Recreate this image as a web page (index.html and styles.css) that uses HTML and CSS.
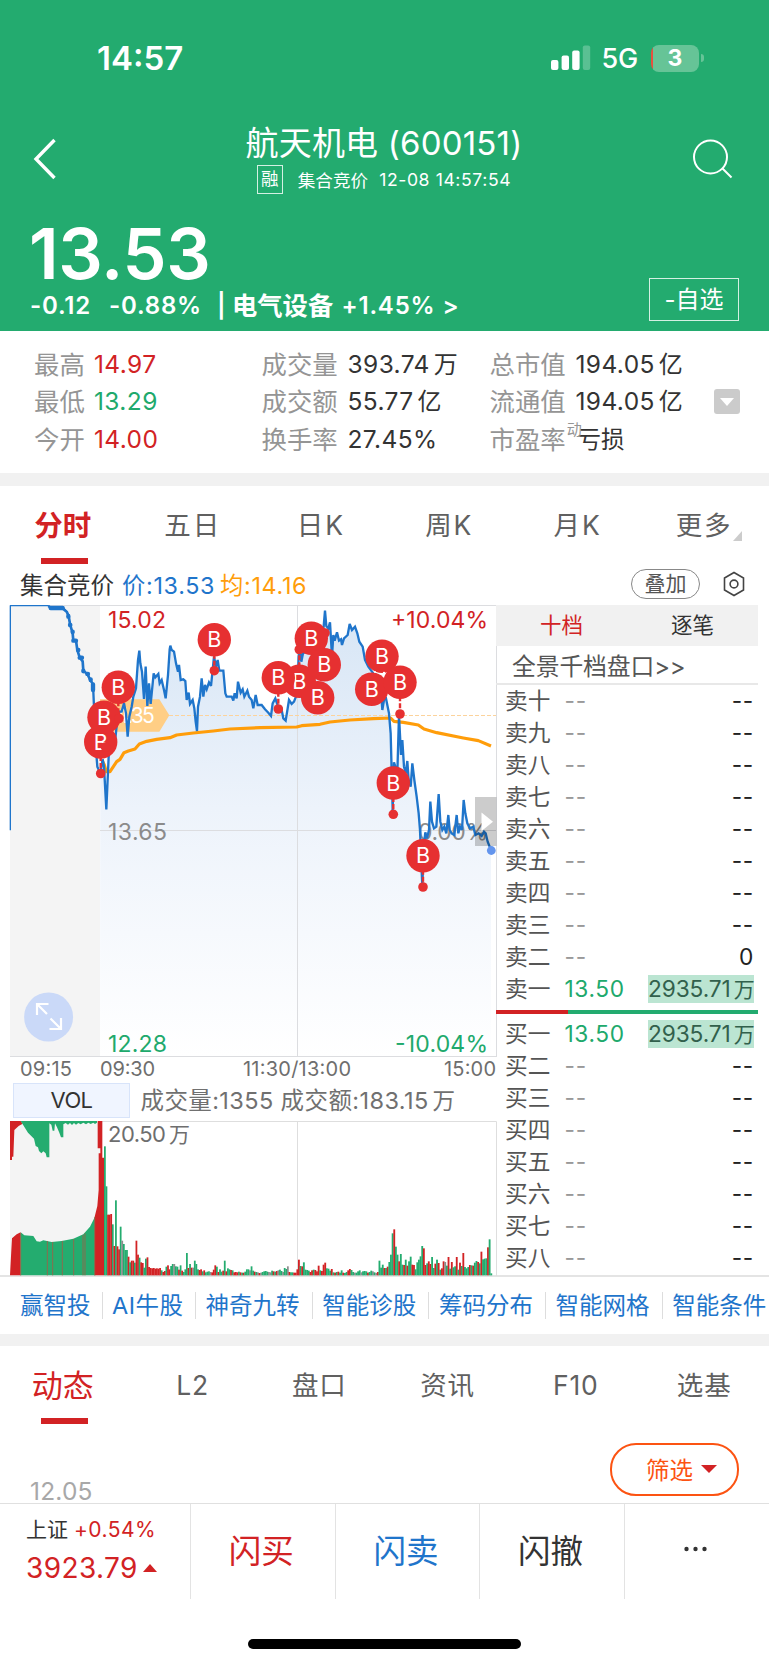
FILE: index.html
```html
<!DOCTYPE html>
<html lang="zh-CN">
<head>
<meta charset="utf-8">
<title>航天机电 (600151)</title>
<link rel="stylesheet" href="styles.css">
</head>
<body>
<header class="head">
  <div class="status">
    <span class="clock">14:57</span>
    <svg class="signal" width="40" height="26" viewBox="0 0 40 26"><g fill="#fff"><rect x="0" y="15" width="7.4" height="10" rx="2"/><rect x="10.6" y="10.500" width="7.400" height="14.500" rx="2"/><rect x="21.200" y="5.500" width="7.400" height="19.500" rx="2"/><rect x="31.800" y="0.500" width="7.400" height="24.500" rx="2" opacity=".25"/></g></svg>
    <span class="net">5G</span>
    <span class="battery">3</span><i class="tip"></i>
  </div>
  <div class="nav">
    <svg class="back" width="24" height="42" viewBox="0 0 24 42"><path d="M21.500 2 3 21l18.500 19" fill="none" stroke="#fff" stroke-width="3.400"/></svg>
    <div class="names">
      <h1>航天机电 (600151)</h1>
      <div class="sub"><span class="rong">融</span><span class="phase">集合竞价</span><span class="stamp">12-08 14:57:54</span></div>
    </div>
    <svg class="search" width="42" height="42" viewBox="0 0 42 42"><g fill="none" stroke="#fff" stroke-width="2"><circle cx="18.500" cy="18" r="16.500"/><path d="m30.500 29.500 9 9"/></g></svg>
  </div>
  <div class="price">13.53</div>
  <div class="change"><span class="c1">-0.12</span><span class="c2">-0.88%</span><span class="c3">|</span><span class="c4">电气设备</span><span class="c5">+1.45%</span><span>&gt;</span></div>
  <button class="fav">-自选</button>
</header>

<section class="stats">
  <dl class="s1"><dt>最高</dt><dd class="red">14.97</dd><dt>最低</dt><dd class="green">13.29</dd><dt>今开</dt><dd class="red">14.00</dd></dl>
  <dl class="s2"><dt>成交量</dt><dd>393.74<b>万</b></dd><dt>成交额</dt><dd>55.77<b>亿</b></dd><dt>换手率</dt><dd>27.45%</dd></dl>
  <dl class="s2"><dt>总市值</dt><dd>194.05<b>亿</b></dd><dt>流通值</dt><dd>194.05<b>亿</b></dd><dt>市盈率<sup>动</sup></dt><dd class="loss">亏损</dd></dl>
  <span class="more"></span>
</section>
<div class="band"></div>

<nav class="tabs">
  <span class="on">分时</span><span class="mid">五日</span><span class="mid">日K</span><span class="mid">周K</span><span class="mid">月K</span><span class="corner">更多</span>
</nav>
<div class="info">
  <span class="i1">集合竞价</span><span class="blue">价:13.53</span><span class="orange">均:14.16</span>
  <span class="pill">叠加</span>
  <svg width="22" height="26" viewBox="0 0 22 26"><g fill="none" stroke="#444" stroke-width="1.600"><path d="M11 1.500 20.500 7v12L11 24.500 1.500 19V7z"/><circle cx="11" cy="13" r="3.900"/></g></svg>
</div>

<main class="market">
  <div class="charts">
    <svg class="trend" width="497" height="476" viewBox="0 605 497 476">
      <defs><linearGradient id="area" gradientUnits="userSpaceOnUse" x1="0" y1="605" x2="0" y2="1057"><stop offset="0" stop-color="#d6e5f5"/><stop offset=".45" stop-color="#edf3fb"/><stop offset="1" stop-color="#fff"/></linearGradient></defs>
      <rect x="10" y="605" width="90" height="452" fill="#f4f4f4"/>
      <path id="fill" fill="url(#area)"/>
      <path d="M10 605.500H496.500V1057M100 830.500H496M10 1056.500H496M297.500 605V1057" fill="none" stroke="#dcdde0"/>
      <path d="M169 715.500H496" stroke="#fcd39c" stroke-dasharray="4 2"/>
      <g font-size="23">
        <text x="108" y="628" textLength="58" fill="#d22224">15.02</text>
        <text x="391" y="628" textLength="97" fill="#d22224">+10.04%</text>
        <text x="108" y="840" textLength="59" fill="#8b8b8b">13.65</text>
        <text x="418" y="840" textLength="70" fill="#8b8b8b">0.00%</text>
        <text x="108" y="1051.500" textLength="59" fill="#20a96c">12.28</text>
        <text x="395" y="1051.500" textLength="93" fill="#20a96c">-10.04%</text>
      </g>
      <g transform="translate(0 600) scale(.33333)" fill="none" stroke-linejoin="round">
        <path d="M300 298H478L508 346 478 395H300z" fill="#ffce85"/>
        <text x="328" y="369" font-size="63" textLength="136" fill="#fff">14.35</text>
        <path id="avg" stroke="#ff9d0a" stroke-width="9.500"/>
        <path d="M31 691V17H145L150 22H190L203 38" stroke="#1f75cb" stroke-width="4"/>
        <path d="M145 18 152 23H185L200 35 206 48 210 72 218 100 220 122H228L232 150 239 172 248 184 250 212 262 222 270 238 279 253 280 275" stroke="#1f75cb" stroke-width="8"/>
        <path d="M152 24H188M205 48V50M210 75H211M218 95V97M220 122H228M234 150H235M239 173H246M250 212V214M262 222H264M272 238V240M279 253V270" stroke="#1f75cb" stroke-width="13" stroke-linecap="round"/>
        <path d="M280 275 282 320 290 475 292 500 301 520" stroke="#1f75cb" stroke-width="7"/>
        <path id="line" stroke="#1f75cb" stroke-width="7" stroke-linejoin="miter" stroke-miterlimit="3"/>
      </g>
      <circle cx="491.300" cy="850.500" r="4.400" fill="#6495ed"/>
      <g id="marks"></g>
      <rect x="475" y="797" width="21.500" height="49" fill="#000" opacity=".2"/>
      <path d="M481.500 812.500 493 821.700 481.500 831z" fill="#fff"/>
      <circle cx="48.600" cy="1017" r="24.500" fill="#cad9f8"/>
      <path d="M48.500 1004H37v11M37 1004l10 10M49.500 1029H61v-11M61 1029l-10.500-10.500" fill="none" stroke="#fff" stroke-width="2.200"/>
      <g font-size="20" fill="#6e6e6e">
        <text x="20" y="1076" textLength="52">09:15</text>
        <text x="100" y="1076" textLength="55">09:30</text>
        <text x="243" y="1076" textLength="108">11:30/13:00</text>
        <text x="444" y="1076" textLength="52">15:00</text>
      </g>
    </svg>
    <div class="volhead"><span class="vol">VOL</span><span class="voltext">成交量:1355 成交额:183.15<b>万</b></span></div>
    <svg class="volume" width="497" height="156" viewBox="0 1120 497 156">
      <path d="M10 1121.500H496.500V1276M297.500 1121V1276" fill="none" stroke="#dedede"/>
      <g transform="translate(0 1110) scale(.33333)">
        <path d="M30 33H300V496H30z" fill="#f4f4f4"/>
        <path d="M62 496V367L73 376 100 378 110 394 120 395 130 391 155 396 185 393 220 386 250 373 270 350 286 318V496z" fill="#24ac6f"/>
        <path d="M30 496 34 420 36 385 50 373 62 367V496zM284 496V320L292 288 296 240V130H301V115H293V33H307V143H312V496zM30 33H62L68 41 56 48 43 60 40 140H36V150H30z" fill="#d22224"/>
        <path d="M62 33H291V38L285 42 280 38 272 42 265 38 258 43 250 38 242 43 235 39 228 44 222 39 216 45 210 39 204 44 197 39 190 43V82H183L178 68 171 52 165 40 163 62H158L154 44 148 40V142H140L137 130 130 124 124 130 117 123 114 112 107 108 102 86 84 68z" fill="#24ac6f"/>
        <path d="M62 370V496M142 393V496M158 396V496M187 393V496M221 387V496M249 375V496M255 370V496M284 322V496" stroke="#8b6b4d" stroke-width="3"/>
        <g id="bars"></g>
      </g>
      <text x="108" y="1142" font-size="22" fill="#6e6e6e"><tspan textLength="58">20.50</tspan><tspan x="169" font-size="21">万</tspan></text>
    </svg>
  </div>
  <aside class="book">
    <div class="bookhead"><span class="red">十档</span><span>逐笔</span></div>
    <div class="full">全景千档盘口&gt;&gt;</div>
    <ul>
      <li><b>卖十</b><i>--</i><em>--</em></li><li><b>卖九</b><i>--</i><em>--</em></li><li><b>卖八</b><i>--</i><em>--</em></li><li><b>卖七</b><i>--</i><em>--</em></li><li><b>卖六</b><i>--</i><em>--</em></li><li><b>卖五</b><i>--</i><em>--</em></li><li><b>卖四</b><i>--</i><em>--</em></li><li><b>卖三</b><i>--</i><em>--</em></li><li><b>卖二</b><i>--</i><em class="zero">0</em></li><li><b>卖一</b><i class="px">13.50</i><em class="qty">2935.71<b>万</b></em></li>
    </ul>
    <div class="ratio"></div>
    <ul>
      <li><b>买一</b><i class="px">13.50</i><em class="qty">2935.71<b>万</b></em></li><li><b>买二</b><i>--</i><em>--</em></li><li><b>买三</b><i>--</i><em>--</em></li><li><b>买四</b><i>--</i><em>--</em></li><li><b>买五</b><i>--</i><em>--</em></li><li><b>买六</b><i>--</i><em>--</em></li><li><b>买七</b><i>--</i><em>--</em></li><li><b>买八</b><i>--</i><em>--</em></li>
    </ul>
  </aside>
</main>

<div class="links"><span>赢智投</span><span class="ai">AI牛股</span><span>神奇九转</span><span>智能诊股</span><span>筹码分布</span><span>智能网格</span><span>智能条件</span></div>
<div class="band low"></div>
<nav class="tabs second">
  <span class="on">动态</span><span class="mid">L2</span><span>盘口</span><span>资讯</span><span>F10</span><span>选基</span>
</nav>
<section class="feed"><span class="date">12.05</span><span class="filter">筛选<i></i></span></section>
<footer class="dock">
  <div class="index"><p><span>上证</span> <span class="red pct">+0.54%</span></p><p class="idx">3923.79<i></i></p></div>
  <div class="act red">闪买</div><div class="act blue">闪卖</div><div class="act">闪撤</div>
  <div class="act dots"><svg width="26" height="6" viewBox="0 0 26 6"><g fill="#333"><circle cx="3.500" cy="3" r="2.200"/><circle cx="12.500" cy="3" r="2.200"/><circle cx="21.500" cy="3" r="2.200"/></g></svg></div>
</footer>
<div class="home"></div>
<script src="chart.js"></script>
</body>
</html>
```

FILE: styles.css
```css
* { box-sizing: border-box; margin: 0; padding: 0; }
body { width: 769px; height: 1665px; overflow: hidden; background: #fff; color: #333; font-family: Inter, "Noto Sans CJK SC", sans-serif; display: flex; flex-direction: column; }
body > * { flex: none; }
b, i, em { font-weight: inherit; font-style: normal; }
.red { color: #d22224; }
.green { color: #20a96c; }
.blue { color: #1f75cb; }
.orange { color: #ff9d0a; }

.head { height: 331px; background: #23ab6f; color: #fff; position: relative; }
.status { height: 116px; padding: 0 65px 0 97px; display: flex; align-items: center; }
.clock { font-size: 33px; font-weight: 600; letter-spacing: 0; width: 454px; }
.net { font-size: 27px; font-weight: 500; margin-left: 10.5px; width: 49.5px; letter-spacing: -.3px; }
.battery { width: 48px; height: 27px; border-radius: 8px; background: linear-gradient(90deg, #e8503f 0 2px, #66c497 2px); font-size: 23px; line-height: 27px; font-weight: 700; text-align: center; }
.tip { width: 3px; height: 8px; margin-left: 1.5px; background: #66c497; border-radius: 0 3px 3px 0; }
.nav { height: 99px; padding: 6px 35px 0 33px; display: flex; justify-content: space-between; }
.back { margin-top: 16px; }
.search { margin-top: 17px; }
.names { width: 300px; margin-left: 19px; display: flex; flex-direction: column; align-items: center; }
h1 { font-size: 33px; font-weight: 400; line-height: 42px; letter-spacing: .2px; white-space: nowrap; }
.sub { display: flex; align-items: center; height: 32px; font-size: 17.600px; white-space: nowrap; margin-left: 0; margin-top: -1px; }
.rong { width: 26px; height: 29px; border: 1.500px solid #d5f0e3; line-height: 26px; font-size: 17.500px; text-align: center; }
.phase { margin-left: 15px; }
.stamp { margin-left: 11px; letter-spacing: .6px; }
.price { height: 79px; padding-left: 29px; font-size: 70px; line-height: 77px; font-weight: 600; letter-spacing: -.3px; }
.change { display: flex; height: 32px; padding-left: 30px; line-height: 24px; font-size: 24px; font-weight: 600; white-space: nowrap; letter-spacing: .8px; }
.c1 { width: 79px; } .c2 { width: 108px; } .c3 { width: 15px; } .c4 { width: 109.500px; font-size: 25.300px; letter-spacing: 0; } .c5 { width: 101px; }
.fav { position: absolute; left: 649px; top: 278px; width: 90px; height: 43px; border: 1.500px solid #d5f0e3; background: none; color: #fff; font: 24px/39px Inter, "Noto Sans CJK SC", sans-serif; }

.stats { height: 142px; padding: 15px 29px 0 34px; display: flex; }
.stats dl { display: grid; grid-template-columns: 60px 1fr; grid-auto-rows: 37.300px; line-height: 37px; font-size: 24.500px; letter-spacing: .4px; white-space: nowrap; }
.s1 { width: 227.500px; }
.stats .s2 { width: 228px; grid-template-columns: 86px 1fr; }
dt { color: #959595; font-size: 25.400px; letter-spacing: 0; }
dt sup { position: absolute; font-size: 15px; line-height: 16px; margin: 1px 0 0 1px; }
dd b { margin-left: 4px; font-size: 24px; }
.loss { padding-left: 2px; font-size: 23.500px; letter-spacing: 0; }
.more { width: 26px; height: 25px; margin: 43px 0 0 -4px; border-radius: 3px; background: #cbcbcb; display: flex; align-items: center; justify-content: center; }
.more::after { content: ""; border: 7px solid transparent; border-top: 8px solid #fff; border-bottom: 0; }
.band { height: 13px; background: #f1f1f1; }

.tabs { height: 79px; margin-left: -1.500px; display: grid; grid-template-columns: repeat(6, 128.300px); line-height: 79px; font-size: 26.500px; letter-spacing: 2px; text-align: center; color: #606060; white-space: nowrap; }
.tabs .on { color: #d22224; font-weight: 700; font-size: 28.500px; letter-spacing: 0; position: relative; }
.tabs .on::after { content: ""; position: absolute; left: 42.500px; top: 72px; width: 47px; height: 6px; background: #d22224; }
.mid { padding-left: 3.500px; }
.corner { position: relative; }
.corner::after { content: ""; position: absolute; left: 93px; top: 45px; border-left: 9px solid transparent; border-bottom: 10px solid #ccc; }
.info { height: 40px; padding: 0 24px 2px 20px; display: flex; align-items: center; font-size: 23.300px; letter-spacing: .7px; white-space: nowrap; }
.info .i1 { width: 102px; font-size: 23.500px; letter-spacing: 0; margin-top: -1px; }
.info .blue { width: 98px; margin-top: -1px; }
.info .orange { margin-top: -1px; }
.pill { margin: 0 23px 0 auto; width: 69px; height: 30px; border: 1.500px solid #888; border-radius: 15px; text-align: center; line-height: 27px; font-size: 21px; letter-spacing: 0; color: #555; }

.market { height: 672px; display: flex; border-bottom: 2px solid #e4e4e4; }
.charts { width: 496px; display: flex; flex-direction: column; }
.charts svg { display: block; overflow: visible; flex: none; }
.volhead { height: 39px; padding: 2px 0 3px 13px; display: flex; }
.vol { width: 117px; height: 35px; border: 1.500px solid #d8e4fa; background: #f0f5ff; text-align: center; line-height: 32px; font-size: 22px; letter-spacing: -.6px; }
.voltext { margin-left: 10.500px; line-height: 35px; font-size: 23.500px; letter-spacing: .4px; color: #707070; white-space: nowrap; }
.voltext b { margin-left: 4px; font-size: 22.500px; }
.book { width: 262px; }
.bookhead { height: 41px; background: #f1f1f1; display: grid; grid-template-columns: 131px 131px; text-align: center; line-height: 40px; font-size: 21.500px; }
.full { height: 39px; border-bottom: 2px solid #e8e8e8; padding-left: 16px; line-height: 41px; font-size: 23.800px; color: #555; white-space: nowrap; letter-spacing: -.1px; }
.book ul { list-style: none; }
.book li { height: 32px; display: flex; align-items: center; padding: 0 4px 0 9px; font-size: 22.700px; line-height: 32px; color: #555; white-space: nowrap; }
.book li > b { width: 59.500px; }
.book li > i { color: #999; letter-spacing: .7px; }
.book li > em { margin-left: auto; color: #222; letter-spacing: .7px; }
.book li > .px { color: #20a96c; letter-spacing: .6px; }
.book li > .qty { background: #bbe5d2; color: #32604c; height: 28px; line-height: 28px; width: 106px; letter-spacing: -.1px; }
.qty b { font-size: 21px; margin-left: 3px; }
.ratio { height: 4px; margin: 5px 0 4px; background: linear-gradient(90deg, #d22224 0 72px, #23ab6f 72px); }

.links { height: 57px; padding-left: 11px; display: flex; align-items: center; overflow: hidden; font-size: 23.500px; color: #1f75cb; white-space: nowrap; }
.links span { flex: none; padding: 0 12.200px 0 9.500px; line-height: 27px; border-right: 1.500px solid #ddd; }
.links span:first-child { padding: 0 11.500px 0 9px; }
.links .ai { letter-spacing: .5px; padding-left: 9px; padding-right: 11.500px; }
.links span:last-child { border: 0; padding-right: 0; }
.band.low { height: 12px; }
.second .on { font-weight: 400; font-size: 31px; }
.second { font-size: 26.500px; letter-spacing: .8px; }
.feed { height: 77.500px; padding: 18px 30px 0 30px; display: flex; justify-content: space-between; align-items: flex-start; }
.date { margin-top: 34px; font-size: 24.500px; line-height: 28px; letter-spacing: .2px; color: #a8a8a8; }
.filter { width: 129px; height: 53px; border: 2px solid #fc5312; border-radius: 26px; color: #fc5312; font-size: 23.500px; line-height: 51px; padding-left: 34px; display: flex; }
.filter i { margin: 20px 0 0 8px; width: 0; height: 0; border: 8px solid transparent; border-top-color: #d22224; border-bottom: 0; }
.dock { height: 96.500px; border-top: 1.500px solid #e0e0e0; display: grid; grid-template-columns: 191px 144.600px 144.600px 144.600px 144px; }
.dock > div { border-right: 1.500px solid #e3e3e3; }
.dock > .act:last-child { border: 0; }
.act { font-size: 32.500px; display: flex; align-items: center; justify-content: center; padding: 0 3px 5px 0; }
.act.dots { padding: 0 2px 5px 0; }
.index { padding: 10.500px 0 0 26px; font-size: 21px; line-height: 31px; white-space: nowrap; }
.pct { letter-spacing: .5px; }
.idx { color: #d22224; font-size: 28px; line-height: 46px; letter-spacing: .4px; }
.idx i { display: inline-block; margin-left: 5px; vertical-align: 6px; border: 7px solid transparent; border-bottom: 8px solid #d22224; border-top: 0; }
.home { width: 273px; height: 10px; margin: 40px 0 0 248px; border-radius: 5px; background: #000; }
```

FILE: chart.js
```js
// Price samples, in thirds of a pixel from the left and top of the plot.
const price = "301,520 308,478 312,500 319,628 326,470 332,430 345,425 352,360 358,335 365,335 372,310 378,340 383,410 388,350 395,320 400,290 408,265 414,180 418,152 421,190 426,215 432,297 437,200 442,318 447,250 452,312 461,220 466,232 475,222 479,250 485,240 492,270 497,295 504,225 509,148 511,137 515,150 522,155 528,190 534,215 537,195 542,240 550,238 556,243 560,300 566,278 570,312 578,300 583,325 587,365 591,393 594,320 600,290 605,235 610,290 615,255 620,268 627,247 633,258 638,210 642,170 648,200 653,180 658,212 670,212 676,280 680,290 695,290 700,302 704,280 710,295 714,245 718,262 722,278 728,268 733,290 742,272 747,290 755,300 760,325 767,285 773,315 785,315 795,328 805,338 813,348 818,310 826,295 836,325 844,325 850,355 857,362 863,325 867,300 875,312 882,305 888,290 892,275 896,170 900,150 904,185 909,160 925,150 950,140 963,110 971,80 975,32 979,78 985,85 990,67 996,170 1000,105 1004,122 1011,97 1017,122 1023,118 1026,135 1032,115 1043,105 1049,72 1056,90 1065,80 1072,100 1078,125 1088,140 1095,180 1105,200 1120,220 1140,230 1147,330 1152,300 1157,290 1167,340 1172,400 1178,630 1182,487 1186,500 1192,520 1197,345 1203,465 1207,420 1212,500 1217,520 1222,483 1226,540 1232,560 1237,490 1243,540 1250,590 1256,640 1260,690 1267,860 1271,740 1276,697 1281,715 1287,690 1291,605 1296,665 1302,685 1309,680 1316,582 1321,665 1327,690 1333,680 1339,700 1345,645 1349,690 1355,700 1363,705 1370,645 1375,700 1380,680 1386,690 1391,600 1396,640 1402,670 1410,685 1420,680 1426,705 1436,700 1445,708 1452,695 1457,700 1463,725 1473,750";
const average = "306,480 313,495 319,515 330,515 340,500 350,485 360,478 372,458 385,453 405,447 418,432 440,424 470,418 510,413 530,405 580,399 640,393 690,387 780,383 890,381 905,377 960,373 990,366 1050,360 1120,356 1172,354 1182,364 1210,367 1255,375 1272,387 1310,398 1390,414 1435,422 1473,438";
const get = id => document.getElementById(id);
const toPath = s => "M" + s.split(" ").join("L");
get("line").setAttribute("d", toPath(price));
get("avg").setAttribute("d", toPath(average));
const scaled = price.split(" ").map(p => { const [x, y] = p.split(","); return (x / 3).toFixed(1) + "," + (600 + y / 3).toFixed(1); });
get("fill").setAttribute("d", "M" + scaled.join("L") + "L491,1057L100,1057z");

// Buy marks: badge centre, then optional trade point.
const marks = [[118.3,687.3,118.3,718.5],[100.7,742,100.7,773.5],[104,717.3],[214.3,639.7,214.3,670.7],[299.3,681.3,299.3,649.5],[278.3,677.7,278.3,709],[311.3,638.3,325,633],[324.3,664.7],[317.7,697.7],[382,656.3],[371.7,689.3],[400,682.3,400,714],[393.3,783,393.3,814.3],[423,855.7,423,887]];
get("marks").innerHTML = marks.map(([x, y, px, py]) =>
  (px ? `<path d="M${x} ${y}L${px} ${py}" stroke="#e63031" stroke-width="2.400" stroke-dasharray="5 2"/><circle cx="${px}" cy="${py}" r="4.800" fill="#e63031"/>` : "") +
  `<circle cx="${x}" cy="${y}" r="16.700" fill="#e63031"/><text x="${x}" y="${y + 7.5}" font-size="21.500" text-anchor="middle" fill="#fff">B</text>`).join("") +
  '<circle cx="105.500" cy="747" r="4.800" fill="#e63031"/><circle cx="119" cy="718.500" r="4.800" fill="#e63031"/><circle cx="375" cy="672" r="1" fill="#fff"/><circle cx="384" cy="673" r="1.200" fill="#fff"/>';

// Volume bars: colour (r, g or n for flat) and height.
const bars = "g387 g267 r182 r182 r184 g153 r88 g225 r87 r78 g146 n104 g94 g76 g76 r56 g39 r44 r44 g38 r104 r62 g53 r39 r37 g23 g50 r54 r25 r22 r21 r22 r20 r21 r20 r22 g15 r10 r13 g26 r30 r18 g28 g34 n34 g27 g26 r17 g30 r14 g10 g18 g67 r22 g34 r23 n23 g44 g34 g18 r16 r18 g12 r15 g9 g11 g12 n10 r9 r17 r30 g26 r10 g18 g11 r14 g44 r12 g21 g18 r16 g15 r9 r10 r9 g11 r9 g8 r8 g11 g18 g18 n15 g27 g14 r11 g10 n9 r7 n8 g10 g12 g13 g11 n10 n9 g14 r12 g11 r13 n15 g17 g13 n10 g22 g19 n27 r10 g9 g9 r8 r8 r18 r47 g28 r27 g39 g17 g16 g14 r10 r15 g17 r16 r12 r29 g15 r13 r32 r38 g21 g20 g14 r19 g9 r8 g10 r11 g8 g15 r8 g7 g10 r15 r19 g16 g10 n8 g8 g12 g15 n9 g12 g13 g12 r8 g10 g14 n12 g9 n7 r10 g44 g23 g32 r22 g22 r26 g40 g62 g126 r138 g86 g62 r42 g64 g32 r31 g47 r29 g42 g56 r32 r31 g18 g39 g47 g57 g88 r81 r31 g36 r42 r34 g55 g22 r35 g47 r37 g17 r21 r42 n40 g29 r55 g20 r40 g24 g27 r55 g17 r38 g28 r67 g25 g21 g25 r31 g30 r29 g38 g43 r40 g36 r71 g48 g50 g51 r84 g108 g6";
const tint = { r: "#d22224", g: "#24ac6f", n: "#8d8d8d" };
const list = bars.split(" ");
// Bar runs between the session's known peaks.
const stops = [[0, 312], [list.indexOf("r47"), 894], [list.indexOf("r138"), 1180], [list.length, 1476]];
let out = "";
for (let s = 0; s < stops.length - 1; s++) {
  const [from, x0] = stops[s], [to, x1] = stops[s + 1];
  const step = (x1 - x0) / (to - from);
  for (let i = from; i < to; i++) {
    const h = +list[i].slice(1);
    out += `<rect x="${(x0 + (i - from) * step).toFixed(1)}" y="${496 - h}" width="${(step + .6).toFixed(2)}" height="${h}" fill="${tint[list[i][0]]}"/>`;
  }
}
get("bars").innerHTML = out;
```
